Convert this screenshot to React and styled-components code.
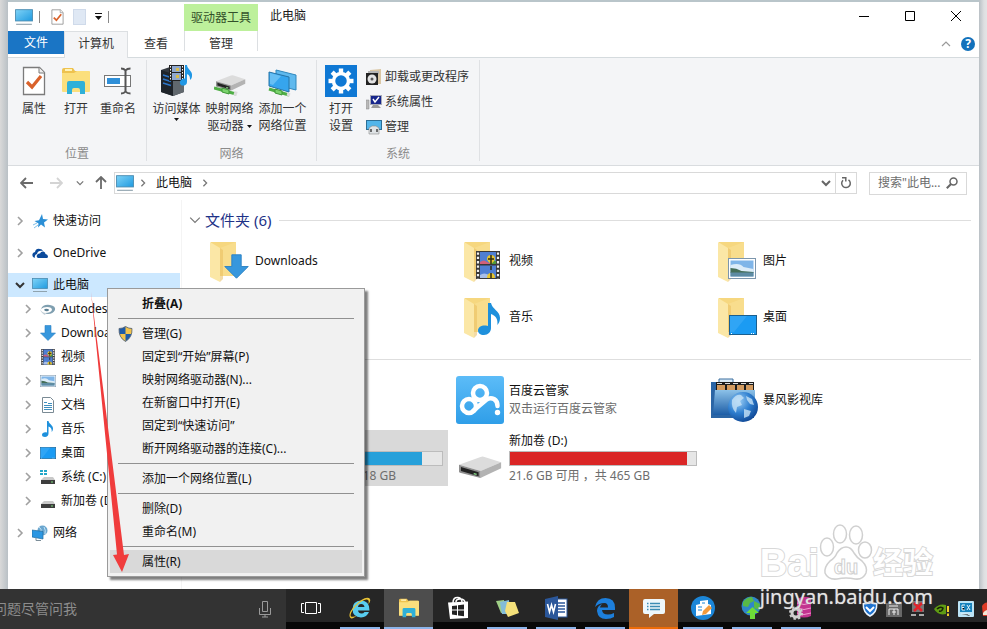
import React from "react";
import styled, { createGlobalStyle, css } from "styled-components";

/* ---------- icons ---------- */

const PcIcon = ({ size = 16 }) => (
    <svg width={size} height={size} viewBox="0 0 16 16">
        <defs>
            <linearGradient id="pc" x1="0" y1="0" x2="1" y2="1">
                <stop offset="0" stopColor="#7fd3f7" />
                <stop offset="1" stopColor="#1f9ae0" />
            </linearGradient>
        </defs>
        <rect x="0.5" y="1.5" width="15" height="10" fill="url(#pc)" stroke="#4a8bb0" strokeWidth=".8" />
        <path d="M1 14.500h14" stroke="#8fa3ae" strokeWidth="1" />
    </svg>
);

const CheckDoc = ({ w = 24, h = 30 }) => (
    <svg width={w} height={h} viewBox="0 0 24 30">
        <path d="M1.5 1.5h16l5 5v22h-21z" fill="#fff" stroke="#7b7b7b" strokeWidth="1.3" />
        <path d="M17 1.5v5.500h5.500" fill="#eee" stroke="#7b7b7b" />
        <path d="M5 16l5 5 9-11" fill="none" stroke="#d9622b" strokeWidth="3.200" />
    </svg>
);

const OpenFolder = ({ w = 30, h = 28 }) => (
    <svg width={w} height={h} viewBox="0 0 30 28">
        <path d="M1 3q0-2 2-2h9l2 3h13q2 0 2 2v18H1z" fill="#eec24f" />
        <path d="M4 2h7v2H4z" fill="#fff3b8" />
        <path d="M1 6h12l3-2h12q1 0 1 2v18q0 1-1 1H2q-1 0-1-1z" fill="#fbdf7d" />
        <path d="M6 27V16q0-2 2-2h14q2 0 2 2v11h-5v-4q0-2-2-2h-4q-2 0-2 2v4z" fill="#2fb0d8" />
    </svg>
);

const RenameIcon = () => (
    <svg width="30" height="28" viewBox="0 0 30 28">
        <rect x="1.500" y="8.500" width="26" height="11" fill="#fff" stroke="#777" />
        <rect x="4" y="11" width="13" height="6" fill="#2f8fd8" />
        <path d="M18 1.500q3 0 4.500 2 1.500-2 5-2M18 26.500q3 0 4.500-2 1.500 2 5 2M22.500 3v22" fill="none" stroke="#555" strokeWidth="2" />
    </svg>
);

const Note = ({ w = 16, h = 16 }) => (
    <svg width={w} height={h} viewBox="0 0 16 16">
        <path d="M7 0h1.500c.5 3 4.500 4 4.500 7.500 0 1.500-.5 2.500-1.300 3.500.3-3-.7-4.500-3.200-5.500v7C8.500 14.500 7 16 5 16s-3-1-3-2.300C2 12 4 11 6 11.300L7 11.500z" fill="#1e90dc" />
    </svg>
);

const Film = ({ w = 14, h = 16 }) => (
    <svg width={w} height={h} viewBox="0 0 24 28">
        <path d="M0 0h24v28H0z" fill="#383838" />
        <path d="M4 1h16v12H4zM4 14.500h16V27H4z" fill="#4f7fd3" />
        <path d="M4 11q4-3 7 0l4 2H4z" fill="#d2607a" />
        <path d="M16 10h4v3h-6z" fill="#4f9a3a" />
        <path d="M4 24q4-3 9 0l3 3H4z" fill="#a9bfe8" />
        <path d="M15 4q4 0 4 4 0 2-4 5-4-3-4-5 0-4 4-4z" fill="#e7c52e" />
        <path d="M15 4v9M12 8h6M15 15v4" stroke="#2f2d16" strokeWidth="1.500" />
        <path d="M15 22q4 0 4 5h-8q0-5 4-5z" fill="#e7c52e" />
        <path d="M15 22v5" stroke="#2f2d16" strokeWidth="1.500" />
        <path d="M2 1.500v26M22 1.500v26" stroke="#f1f1f1" strokeWidth="2.200" strokeDasharray="2.300 2" />
    </svg>
);

const MediaIcon = () => (
    <svg width="32" height="32" viewBox="0 0 32 32">
        <path d="M0 5l9-3 14 3v22l-11 4-12-4z" fill="#333940" />
        <path d="M12 10l11-3v20l-11 4z" fill="#61686e" />
        <path d="M0 5l12 4v22L0 27z" fill="#1f242a" />
        <path d="M2 10l8 2.500M2 14l8 2.500M2 18l8 2.500" stroke="#2d76c9" strokeWidth="1.500" />
        <g transform="translate(8 0)">
            <path d="M0 0h15v16H0z" fill="#222" />
            <path d="M3 1h9v6H3zM3 8h9v7H3z" fill="#8fa8cf" />
            <path d="M7 3h3v3H7zM7 10h3v3H7z" fill="#d8bc4b" />
            <path d="M1.500 1v15M13.500 1v15" stroke="#fff" strokeDasharray="1.500 1.500" />
        </g>
        <path d="M24 0h2c0 4 6 6 5 11 0 2-1 3-2 4 0-4-1-5-3-6v8c0 3-3 4-5 3.500S18 17 20 15s3-1.500 4-1.500z" fill="#2097e5" />
    </svg>
);

const DriveShape = () => (
    <g>
        <path d="M0 10L22 1q2-.8 4 0l17 6L22 17z" fill="#dcdcdc" />
        <path d="M22 17L43 7v7L24 24l-2 1z" fill="#b3b3b3" />
        <path d="M0 10l22 7v8L1 19q-1-.5-1-1z" fill="#8f8f8f" />
        <path d="M2 12.500l18 6v4.500L2 17z" fill="#232323" />
        <path d="M15 20l3 1" stroke="#8adf8a" strokeWidth="1.500" />
    </g>
);

const NetDrive = () => (
    <svg width="32" height="32" viewBox="0 0 32 32">
        <g transform="translate(2 10) scale(.68 .62)"><DriveShape /></g>
        <path d="M0 23l22 6" stroke="#4fae45" strokeWidth="3" />
        <path d="M8 23l7 2v4l-7-2z" fill="#7bd36d" stroke="#3e9637" />
        <path d="M20 28l3 1" stroke="#ddd" strokeWidth="4" />
    </svg>
);

const NetPlace = () => (
    <svg width="32" height="32" viewBox="0 0 32 32">
        <path d="M9 5l20 5v15L9 20z" fill="#5fb9ee" stroke="#2f87bd" />
        <path d="M2 7l20 5v15L2 21z" fill="#36a5ee" stroke="#2774a6" />
        <path d="M3 8l11 3-8 9-3-1z" fill="#7ccbf7" opacity=".7" />
        <path d="M2 24l20 6" stroke="#4fae45" strokeWidth="3" />
        <path d="M8 24l7 2v4l-7-2z" fill="#7bd36d" stroke="#3e9637" />
        <path d="M20 29l3 1" stroke="#ddd" strokeWidth="3" />
    </svg>
);

const GearIcon = () => (
    <svg width="32" height="32" viewBox="0 0 32 32">
        <rect width="32" height="32" fill="#0f78d4" />
        <g stroke="#fff" strokeWidth="4.400">
            {[0, 45, 90, 135].map((a) => (
                <path key={a} d="M16 3.500v25" transform={`rotate(${a} 16 16)`} />
            ))}
        </g>
        <circle cx="16" cy="16" r="7.500" fill="#0f78d4" stroke="#fff" strokeWidth="3.500" />
    </svg>
);

const UninstallIcon = () => (
    <svg width="16" height="16" viewBox="0 0 16 16">
        <path d="M4 1l11-1v15H4z" fill="#d9c6a4" />
        <path d="M2 2h11v3H2z" fill="#b6b6b6" />
        <rect x="0" y="4" width="12" height="12" fill="#222" />
        <circle cx="6" cy="10" r="4.500" fill="#e2e2e2" />
        <circle cx="6" cy="10" r="1.500" fill="#555" />
    </svg>
);

const SysPropIcon = () => (
    <svg width="16" height="16" viewBox="0 0 16 16">
        <path d="M0 6h3v9H0z" fill="#b9b9b9" stroke="#888" strokeWidth=".5" />
        <rect x="4.500" y="1.500" width="11" height="9" fill="#17268c" stroke="#a7aab8" />
        <path d="M7 5l2 3 4-5" fill="none" stroke="#fff" strokeWidth="1.400" />
        <path d="M7 11h5l3 3H5z" fill="#999" />
    </svg>
);

const ManageIcon = () => (
    <svg width="16" height="16" viewBox="0 0 16 16">
        <rect x=".5" y="1.500" width="15" height="9" fill="#52b5ea" stroke="#2d6f96" />
        <path d="M3 9l3-2h4l3 2v6H3z" fill="#dfe3e6" stroke="#8a8a8a" strokeWidth=".6" />
        <path d="M5 10v3M11 10v3" stroke="#444" strokeWidth="1.500" />
    </svg>
);

const StarIcon = () => (
    <svg width="16" height="16" viewBox="0 0 16 16">
        <path d="M10 1l1 5 5 .5-4 3 1 5-4-3-3 3 .5-4-4-2.500 4.500-.8z" fill="#2b8fd6" />
        <path d="M1 12l4-2M2 15l4-3" stroke="#7fbfe8" />
    </svg>
);

const CloudIcon = () => (
    <svg width="16" height="16" viewBox="0 0 16 16">
        <path d="M1 12q-2-4 2-5 1-4 5-3 2 0 3 2-5-1-6 3-3 1-2 4z" fill="#0b4a9b" />
        <path d="M6 13q-2-1-1-3t3-1.500q1-2.500 3.500-2 2 .5 2 2.500 2.500.5 2.500 2.500 0 1-1 1.500z" fill="#0b4a9b" />
    </svg>
);

const AutodeskIcon = () => (
    <svg width="16" height="16" viewBox="0 0 16 16">
        <path d="M1 8q2-5 9-4 6 1 5 5-2 4-7 4-2 0-3-1 6 0 7-3 0-3-5-3-4 0-6 2z" fill="#7f9fb0" />
        <path d="M4 9q1-2 4-1 2 1 0 2-2 1-4-1z" fill="#5a7e92" />
        <path d="M0 8q2 4 6 4l-1 2Q1 12 0 8z" fill="#c3d0d8" />
    </svg>
);

const DownArrow = ({ w = 16, h = 16 }) => (
    <svg width={w} height={h} viewBox="0 0 16 16">
        <path d="M5 .5h6V8h4.500L8 15.500.5 8H5z" fill="#3797dd" stroke="#2c82c4" strokeWidth=".6" />
    </svg>
);

const Picture = ({ w = 16, h = 14 }) => (
    <svg width={w} height={h} viewBox="0 0 28 21" preserveAspectRatio="none">
        <rect x=".5" y=".5" width="27" height="20" fill="#fff" stroke="#7c96ad" />
        <path d="M2.500 2.500h23v16h-23z" fill="#7fb5e8" />
        <path d="M2.500 7q9-3 13 2l10 2v3h-23z" fill="#dcecf8" />
        <path d="M2.500 10q6 0 11 3l12 1v1h-23z" fill="#446e58" />
        <path d="M2.500 14.500h23v4h-23z" fill="#5d8ba3" />
    </svg>
);

const DocIcon = () => (
    <svg width="14" height="16" viewBox="0 0 14 16">
        <path d="M1.500.5h8l3 3v12h-11z" fill="#fff" stroke="#7a8a94" />
        <path d="M3 5.500h3M3 8.500h8M3 10.500h8M3 12.500h8M7 6.500h4" stroke="#3f8fbf" />
    </svg>
);

const Desktop = ({ w = 16, h = 12 }) => (
    <svg width={w} height={h} viewBox="0 0 28 20" preserveAspectRatio="none">
        <rect x=".5" y=".5" width="27" height="19" fill="#1b9bf3" stroke="#1a5f8f" />
        <path d="M1 1h17L5 17H1z" fill="#45b0f8" opacity=".5" />
        <path d="M2 18.500h2M22 18.500h4" stroke="#fff" strokeDasharray="1 1" />
    </svg>
);

const SmallDrive = ({ system }) => (
    <svg width="16" height="16" viewBox="0 0 16 16">
        {system && <path d="M0 1h3v2H0zM4 1h3v2H4zM0 4h3v2H0zM4 4h3v2H4z" fill="#22a7c9" />}
        <path d="M4 8h9l2 3H1z" fill="#c9c9c9" />
        <path d="M1 11h14v4H1z" fill="#3d3d3d" />
        <path d="M11 13h2" stroke="#7ddb7d" />
    </svg>
);

const NetworkIcon = () => (
    <svg width="16" height="16" viewBox="0 0 16 16">
        <circle cx="10.500" cy="5.500" r="5" fill="#6aa6cf" />
        <path d="M7 2q3 2 2 5M12 2q2 3 1 7" stroke="#c4e3f6" fill="none" />
        <path d="M0 5l11 1.500V14L0 12z" fill="#2c97e2" stroke="#226c9e" strokeWidth=".7" />
        <path d="M4 13v2.500h5" stroke="#7b8d98" fill="none" />
    </svg>
);

const ShieldIcon = () => (
    <svg width="15" height="16" viewBox="0 0 15 16">
        <path d="M7.500.5q3 2 6.500 2 .5 9-6.500 13Q.5 11.500 1 2.500q3.500 0 6.500-2z" fill="#1e5ba8" />
        <path d="M7.500.5q3 2 6.500 2 .2 3-.3 5.500H7.500zM7.500 8v7.500Q3 13 1.500 8z" fill="#f2c34c" />
        <path d="M7.500.5q3 2 6.500 2 .5 9-6.500 13Q.5 11.500 1 2.500q3.500 0 6.500-2z" fill="none" stroke="#5a6672" strokeWidth=".8" />
    </svg>
);

// half open folder with something standing in front of it
const FolderTile = ({ children }) => (
    <svg width="48" height="48" viewBox="0 0 48 48">
        <path d="M9 5h25v34H9z" fill="#f6d77f" />
        <path d="M18 11l16-6v34H18z" fill="#f8dd8d" />
        <path d="M8 5l10 6v34l-10-5z" fill="#fbe7a6" />
        <path d="M18 11v34l3-3V13z" fill="#e9bd5f" opacity=".55" />
        {children}
    </svg>
);

const BaiduCloud = () => (
    <svg width="48" height="48" viewBox="0 0 48 48">
        <defs>
            <linearGradient id="bd" x1="0" y1="0" x2="0" y2="1">
                <stop offset="0" stopColor="#5cbcf8" />
                <stop offset="1" stopColor="#2f9ee8" />
            </linearGradient>
        </defs>
        <rect width="48" height="48" rx="3" fill="url(#bd)" />
        <circle cx="13" cy="30" r="7" fill="none" stroke="#fff" strokeWidth="4.500" />
        <circle cx="24" cy="17" r="7" fill="none" stroke="#fff" strokeWidth="4.500" />
        <path d="M17 35l13-11q4-3 8-1 3.500 2 3.500 7" fill="none" stroke="#fff" strokeWidth="4.500" strokeLinecap="round" />
        <circle cx="41.500" cy="36.500" r="2.700" fill="#fff" />
    </svg>
);

const BaofengIcon = () => (
    <svg width="48" height="48" viewBox="0 0 48 48">
        <defs>
            <linearGradient id="bf" x1="0" y1="0" x2="0" y2="1">
                <stop offset="0" stopColor="#8cc1e8" />
                <stop offset="1" stopColor="#1c5da6" />
            </linearGradient>
            <radialGradient id="gl" cx=".35" cy=".3" r=".8">
                <stop offset="0" stopColor="#9ed0f5" />
                <stop offset=".5" stopColor="#2f7fd0" />
                <stop offset="1" stopColor="#0b3f8c" />
            </radialGradient>
        </defs>
        <path d="M9 6V3h14v3" fill="#dbeaf6" stroke="#3b6f9f" />
        <path d="M1 6h43v36H1z" fill="#2b65a5" />
        <path d="M6 6h38v9H6z" fill="#1c1c1c" />
        <path d="M7 9h8v6H7zM17 9h8v6h-8zM27 9h7v6h-7zM36 9h7v6h-7z" fill="#d29a5f" />
        <path d="M7 7.500h36" stroke="#ddd" strokeDasharray="5 3" />
        <path d="M5 14h40v25H3z" fill="url(#bf)" />
        <circle cx="33" cy="31" r="15" fill="url(#gl)" />
        <path d="M22 24q4-6 9-5l3 3-4 3 2 4-5 2-1 6q-5-5-4-13zM36 20l6 3 2 6-4-1-3-4zM34 33l7 2-2 5-5 2z" fill="#c7e2f6" opacity=".8" />
    </svg>
);

const BigDrive = () => (
    <svg width="48" height="48" viewBox="0 0 48 48">
        <g transform="translate(3 22) scale(.98 .88)"><DriveShape /></g>
    </svg>
);

const Chevron = ({ dir = "right", size = 10, color = "#9a9a9a", weight = 1.6 }) => {
    const turn = { right: 0, down: 90, left: 180, up: 270 }[dir];
    return (
        <svg width={size} height={size} viewBox="0 0 10 10">
            <path d="M3 1l4 4-4 4" fill="none" stroke={color} strokeWidth={weight} transform={`rotate(${turn} 5 5)`} />
        </svg>
    );
};

const Arrow = ({ dir = "left", color = "#6a6a6a" }) => (
    <svg width="14" height="14" viewBox="0 0 14 14">
        <path d="M1 7h12M6 2L1 7l5 5" fill="none" stroke={color} strokeWidth="1.800" transform={`rotate(${{ left: 0, up: 90, right: 180 }[dir]} 7 7)`} />
    </svg>
);

const Caret = () => (
    <svg width="5" height="3" viewBox="0 0 5 3"><path d="M0 0h5L2.500 3z" fill="#111" /></svg>
);

/* ---------- taskbar icons ---------- */

const IeIcon = () => (
    <svg width="24" height="24" viewBox="0 0 24 24">
        <path d="M21 16q-2 5-8 5.500-8.500-.5-8.500-8.500T13 4.500q8.500 0 8.500 10H10q.5 3 3.500 3 2 0 3-1.500zM10 11h6.500q-.5-3-3.300-3T10 11z" fill="#58cdf0" fillRule="evenodd" />
        <path d="M2.500 22Q-1 18 7 9.500 16 0 21 2q3 2-1 7 2-5-1-5.500Q15 3 8 10 1 18 3 20.500q2 1 6-1-5 4-6.500 2.500z" fill="#eac436" />
    </svg>
);

const StoreIcon = () => (
    <svg width="24" height="24" viewBox="0 0 24 24">
        <path d="M7 7Q7 1 12 1.500q4 .5 4 5M10 6q0-3 4-3 5 0 5 4" fill="none" stroke="#fff" strokeWidth="1.500" />
        <path d="M2 6.500l20-1V22L4 23z" fill="#fff" />
        <path d="M6 10l5-.6v4.200H6zM12 9.300l6-.7v5h-6zM6 14.600h5v4.600l-5-.7zM12 14.600h6v5.600l-6-.8z" fill="#222" />
    </svg>
);

const NotesIcon = () => (
    <svg width="24" height="24" viewBox="0 0 24 24">
        <path d="M1 5l8-1 3 12-6 1z" fill="#9fcf86" />
        <path d="M5 6l9-2 1 14-8 0z" fill="#83bcd8" />
        <path d="M12 6l8 0 4 11-11 4-3-6z" fill="#f4e07a" />
    </svg>
);

const WordIcon = () => (
    <svg width="24" height="24" viewBox="0 0 24 24">
        <rect x="12" y="3" width="11" height="18" fill="#fff" stroke="#2b579a" />
        <path d="M14 7h7M14 10h7M14 13h7M14 16h7" stroke="#2b579a" strokeWidth="1.500" />
        <path d="M1 3l13-3v24L1 21z" fill="#2b579a" />
        <path d="M3.500 8l2 8 2-7 2 7 2-8" fill="none" stroke="#fff" strokeWidth="1.600" />
    </svg>
);

const EdgeIcon = () => (
    <svg width="24" height="24" viewBox="0 0 24 24">
        <path d="M2 11Q4 2 12.500 2 22 2 22 12v2H9q.5 4.500 6 4.500 3 0 6-1.500v4q-3 2-8 2-8 0-9-8 0-5 5-7-2 2-2 3.500h8Q15 7 11.500 7 6 7 2 11z" fill="#1d7fdb" />
    </svg>
);

const ChatIcon = () => (
    <svg width="24" height="24" viewBox="0 0 24 24">
        <path d="M3 3h18q2 0 2 2v11q0 2-2 2h-9l-5 4v-4H3q-2 0-2-2V5q0-2 2-2z" fill="#eef7fb" />
        <path d="M8 7.500h10M8 10.500h10M8 13.500h10" stroke="#3c8cb4" strokeWidth="1.300" />
        <path d="M5 7.500h1.500M5 10.500h1.500M5 13.500h1.500" stroke="#3c8cb4" strokeWidth="1.300" />
    </svg>
);

const EditorIcon = () => (
    <svg width="24" height="24" viewBox="0 0 24 24">
        <circle cx="12" cy="12" r="12" fill="#1b86d8" />
        <path d="M5 9l4-1V5l8-1v4l3 1v9l-15 2z" fill="#fff" />
        <path d="M7 11h4M7 14h4M11 7h3" stroke="#1b86d8" />
        <path d="M11 19l1-4 6-6 3 3-6 6z" fill="#f19a3c" />
    </svg>
);

const GlobeIcon = () => (
    <svg width="24" height="24" viewBox="0 0 24 24">
        <circle cx="11" cy="10" r="9.500" fill="#2f86c9" />
        <path d="M3 6q4-5 9-5l2 4-4 2-2 4-5-1zM14 5l6 3-1 6-5-2z" fill="#58b947" />
        <path d="M10 23v-6H6l6.500-6L19 17h-4v6z" fill="#6ddc38" />
    </svg>
);

const DbIcon = () => (
    <svg width="24" height="24" viewBox="0 0 24 24">
        <path d="M8 3q7-4 14-1v18q-7 3-14 0z" fill="#c2338f" />
        <path d="M8 7q7 3 14 0M8 12q7 3 14 0M8 17q7 3 14 0" stroke="#f09bcf" fill="none" />
        <circle cx="7" cy="17" r="4" fill="none" stroke="#cfcfcf" strokeWidth="3" />
        <circle cx="7" cy="17" r="6" fill="none" stroke="#cfcfcf" strokeWidth="2" strokeDasharray="2.400 2.300" />
    </svg>
);

const TaskViewIcon = () => (
    <svg width="20" height="14" viewBox="0 0 20 14">
        <path d="M4.500 1.500h11v11h-11zM3 2.500H.5v9H3M17 2.500h2.500v9H17" fill="none" stroke="#fff" />
    </svg>
);

const MicIcon = () => (
    <svg width="12" height="18" viewBox="0 0 12 18">
        <path d="M3.500 1.500h5v10h-5zM.5 8v6.500h11V8M6 14.500V17M3 17h6" fill="none" stroke="#9a9a9a" />
    </svg>
);

const TRAY = [
    <svg key="guard" width="16" height="16" viewBox="0 0 16 16">
        <path d="M8 0q4 2 7.500 2Q16 12 8 16 0 12 .5 2 4 2 8 0z" fill="#e9f2fb" />
        <path d="M8 2q3 1.500 6 1.500Q14 11 8 14 2 11 2 3.500 5 3.500 8 2z" fill="#1d72cf" />
        <path d="M4 6l4 4 4-4" fill="none" stroke="#fff" strokeWidth="2" />
    </svg>,
    <svg key="store" width="16" height="16" viewBox="0 0 16 16">
        <path d="M0 2h16v14H0z" fill="#686868" />
        <path d="M3 5h9M3 8h9M3 8v6M12 8v6M6 11h4M8 8v6M10 3l4-2" stroke="#eee" fill="none" />
    </svg>,
    <svg key="net" width="16" height="16" viewBox="0 0 16 16">
        <path d="M2 0h12v11H2z" fill="#777" />
        <path d="M4 2l8 8M12 2l-8 8" stroke="#e3232b" strokeWidth="2.500" />
        <path d="M1 14h5M9 14h5" stroke="#aaa" strokeWidth="2" />
    </svg>,
    <svg key="gpu" width="16" height="16" viewBox="0 0 16 16">
        <path d="M0 8q5-6 12-4v9Q4 15 0 8z" fill="#5f9c13" />
        <path d="M3 8q3-3 6-1-1 4-4 3" fill="none" stroke="#192206" strokeWidth="1.500" />
        <path d="M14 5v6M14 12.500V15" stroke="#f1d02c" strokeWidth="2" />
    </svg>,
    <svg key="gfx" width="16" height="16" viewBox="0 0 16 16">
        <rect width="16" height="16" rx="1" fill="#bce4f6" />
        <path d="M2 2h12v9H2z" fill="#1883bd" />
        <path d="M4 4h3M4 4v5h3M4 6.500h2M9 4l3 5M12 4L9 9M3 13h7l3 2" stroke="#e2f5fd" />
    </svg>,
    <svg key="fire" width="16" height="16" viewBox="0 0 16 16">
        <path d="M0 5q3-5 7-3l7 6-3 7H1z" fill="#dd3a26" />
        <path d="M1 12q3-5 8-2v4H1z" fill="#f2e7d7" />
    </svg>,
];

/* ---------- data ---------- */

const tree = [
    { name: "快速访问", icon: <StarIcon />, gap: 8 },
    { name: "OneDrive", icon: <CloudIcon />, gap: 8 },
    { name: "此电脑", icon: <PcIcon />, open: true },
    { name: "Autodesk", icon: <AutodeskIcon />, child: true },
    { name: "Downloads", icon: <DownArrow />, child: true },
    { name: "视频", icon: <Film />, child: true },
    { name: "图片", icon: <Picture h={12} />, child: true },
    { name: "文档", icon: <DocIcon />, child: true },
    { name: "音乐", icon: <Note />, child: true },
    { name: "桌面", icon: <Desktop />, child: true },
    { name: "系统 (C:)", icon: <SmallDrive system />, child: true },
    { name: "新加卷 (D:)", icon: <SmallDrive />, child: true, gap: 8 },
    { name: "网络", icon: <NetworkIcon /> },
];

const folders = [
    { name: "Downloads", over: <g transform="translate(22 17)"><DownArrow w={25} h={25} /></g> },
    { name: "视频", over: <g transform="translate(20 14)"><Film w={24} h={28} /></g> },
    { name: "图片", over: <g transform="translate(18 21)"><Picture w={28} h={21} /></g>, col: 3 },
    { name: "音乐", over: <g transform="translate(18 10)"><Note w={32} h={32} /></g>, col: 2 },
    { name: "桌面", over: <g transform="translate(19 22)"><Desktop w={28} h={20} /></g> },
];

const menu = [
    { label: "折叠(A)", bold: true },
    null,
    { label: "管理(G)", icon: <ShieldIcon /> },
    { label: "固定到“开始”屏幕(P)" },
    { label: "映射网络驱动器(N)..." },
    { label: "在新窗口中打开(E)" },
    { label: "固定到“快速访问”" },
    { label: "断开网络驱动器的连接(C)..." },
    null,
    { label: "添加一个网络位置(L)" },
    null,
    { label: "删除(D)" },
    { label: "重命名(M)" },
    null,
    { label: "属性(R)", hot: true },
];

const apps = [
    { name: "Internet Explorer", icon: <IeIcon />, running: true },
    { name: "文件资源管理器", icon: <OpenFolder w={22} h={20} />, running: true, active: true },
    { name: "应用商店", icon: <StoreIcon /> },
    { name: "便笺", icon: <NotesIcon />, running: true },
    { name: "Word", icon: <WordIcon />, running: true },
    { name: "Edge", icon: <EdgeIcon />, running: true },
    { name: "消息", icon: <ChatIcon />, alert: true },
    { name: "编辑器", icon: <EditorIcon />, running: true },
    { name: "下载", icon: <GlobeIcon />, running: true },
    { name: "数据库", icon: <DbIcon />, running: true },
];

/* ---------- page ---------- */

export default function App() {
    return (
        <Screen>
            <GlobalStyle />
            <Backdrop>
                <Explorer>
                    <TitleBar>
                        <QuickAccess>
                            <PcIcon size={18} />
                            <Tick />
                            <CheckDoc w={13} h={16} />
                            <BlankPage />
                            <Customize aria-label="自定义快速访问工具栏">
                                <i />
                                <svg width="7" height="4" viewBox="0 0 7 4"><path d="M0 0h7L3.500 4z" fill="#111" /></svg>
                            </Customize>
                            <Tick />
                        </QuickAccess>
                        <ToolTab>驱动器工具</ToolTab>
                        <Title>此电脑</Title>
                        <WinButton aria-label="最小化">
                            <svg width="10" height="10"><path d="M0 5.500h10" stroke="#000" /></svg>
                        </WinButton>
                        <WinButton aria-label="最大化">
                            <svg width="10" height="10"><path d="M.5 .5h9v9h-9z" fill="none" stroke="#000" /></svg>
                        </WinButton>
                        <WinButton aria-label="关闭">
                            <svg width="10" height="10"><path d="M0 0l10 10M10 0L0 10" stroke="#000" /></svg>
                        </WinButton>
                    </TitleBar>

                    <Tabs>
                        <FileTab>文件</FileTab>
                        <Tab $width={64} $current>计算机</Tab>
                        <Tab $width={56}>查看</Tab>
                        <Tab $width={74} $tool>管理</Tab>
                        <TabEnd>
                            <IconButton aria-label="折叠功能区"><Chevron dir="up" weight={1.2} /></IconButton>
                            <HelpButton aria-label="帮助">?</HelpButton>
                        </TabEnd>
                    </Tabs>

                    <Ribbon>
                        <Group $width={139}>
                            <GroupBody $inset={5}>
                                <BigButton $width={42}><BigIcon><CheckDoc /></BigIcon>属性</BigButton>
                                <BigButton $width={42}><BigIcon><OpenFolder /></BigIcon>打开</BigButton>
                                <BigButton $width={42}><BigIcon><RenameIcon /></BigIcon>重命名</BigButton>
                            </GroupBody>
                            <GroupName>位置</GroupName>
                        </Group>
                        <Group $width={170}>
                            <GroupBody $inset={3}>
                                <BigButton $width={53}>
                                    <BigIcon><MediaIcon /></BigIcon>访问媒体<CaretLine><Caret /></CaretLine>
                                </BigButton>
                                <BigButton $width={53}>
                                    <BigIcon><NetDrive /></BigIcon>映射网络<span>驱动器 <Caret /></span>
                                </BigButton>
                                <BigButton $width={53}><BigIcon><NetPlace /></BigIcon>添加一个<span>网络位置</span></BigButton>
                            </GroupBody>
                            <GroupName>网络</GroupName>
                        </Group>
                        <Group $width={163}>
                            <GroupBody $inset={3}>
                                <BigButton $width={42}><BigIcon><GearIcon /></BigIcon>打开<span>设置</span></BigButton>
                                <SmallList>
                                    <SmallButton><UninstallIcon />卸载或更改程序</SmallButton>
                                    <SmallButton><SysPropIcon />系统属性</SmallButton>
                                    <SmallButton><ManageIcon />管理</SmallButton>
                                </SmallList>
                            </GroupBody>
                            <GroupName>系统</GroupName>
                        </Group>
                    </Ribbon>

                    <AddressRow>
                        <NavButtons>
                            <IconButton aria-label="后退"><Arrow /></IconButton>
                            <IconButton aria-label="前进"><Arrow dir="right" color="#d4d4d4" /></IconButton>
                            <IconButton aria-label="最近"><Chevron dir="down" size={8} color="#777" /></IconButton>
                            <IconButton aria-label="上移"><Arrow dir="up" /></IconButton>
                        </NavButtons>
                        <Address>
                            <PcIcon size={18} />
                            <Chevron color="#777" size={8} />
                            <Crumb>此电脑</Crumb>
                            <Chevron color="#777" size={8} />
                            <AddressEnd>
                                <IconButton aria-label="历史记录"><Chevron dir="down" color="#666" weight={2} /></IconButton>
                                <Refresh aria-label="刷新">
                                    <svg width="12" height="12" viewBox="0 0 12 12">
                                        <path d="M3 3.200a4.300 4.300 0 1 0 5.500-.4M2 .8h3.800v3.700" fill="none" stroke="#666" strokeWidth="1.500" />
                                    </svg>
                                </Refresh>
                            </AddressEnd>
                        </Address>
                        <Search>
                            <input type="text" aria-label="搜索此电脑" placeholder={'搜索"此电...'} />
                            <svg width="12" height="12" viewBox="0 0 12 12">
                                <circle cx="7.500" cy="4.500" r="3.500" fill="none" stroke="#666" strokeWidth="1.500" />
                                <path d="M5 7L.8 11.200" stroke="#666" strokeWidth="2" />
                            </svg>
                        </Search>
                    </AddressRow>

                    <Body>
                        <Tree>
                            {tree.map((n) => (
                                <TreeRow key={n.name} $child={n.child} $open={n.open} $gap={n.gap}>
                                    <Chevron dir={n.open ? "down" : "right"} color={n.open ? "#333" : "#a0a0a0"} weight={n.open ? 2 : 1.6} />
                                    <TreeIcon>{n.icon}</TreeIcon>
                                    {n.name}
                                </TreeRow>
                            ))}
                        </Tree>
                        <Main>
                            <SectionHead><Chevron dir="down" color="#777" weight={1} size={12} />文件夹 (6)<hr /></SectionHead>
                            <Tiles>
                                {folders.map((f) => (
                                    <Tile key={f.name} $col={f.col}>
                                        <FolderTile>{f.over}</FolderTile>
                                        <TileText>{f.name}</TileText>
                                    </Tile>
                                ))}
                            </Tiles>
                            <SectionHead as="div"><hr /></SectionHead>
                            <Tiles $gap={2}>
                                <Tile $col={2}>
                                    <BaiduCloud />
                                    <TileText>百度云管家<Muted>双击运行百度云管家</Muted></TileText>
                                </Tile>
                                <Tile>
                                    <BaofengIcon />
                                    <TileText>暴风影视库</TileText>
                                </Tile>
                                <Drive name="系统 (C:)" used={89} color="#26a0da" free="12.6" total="118" selected />
                                <Drive name="新加卷 (D:)" used={95} color="#da2626" free="21.6" total="465" />
                            </Tiles>
                        </Main>
                    </Body>

                    <Menu role="menu">
                        {menu.map((m, i) =>
                            m ? (
                                <li key={i} role="none">
                                    <MenuItem role="menuitem" $bold={m.bold} $hot={m.hot}>
                                        <MenuIcon>{m.icon}</MenuIcon>
                                        {m.label}
                                    </MenuItem>
                                </li>
                            ) : (
                                <MenuLine key={i} role="separator" />
                            )
                        )}
                    </Menu>
                    <Pointer width="44" height="286" viewBox="0 0 44 286">
                        <path d="M3 4L36 267l5-1-7 18-9-17 4-.5z" fill="#f03c3c" />
                    </Pointer>
                </Explorer>
            </Backdrop>

            <Taskbar>
                <Cortana>
                    <input type="text" aria-label="搜索" placeholder="问题尽管问我" />
                    <MicIcon />
                </Cortana>
                <TaskButton aria-label="任务视图"><TaskViewIcon /></TaskButton>
                {apps.map((a) => (
                    <TaskButton key={a.name} aria-label={a.name} $running={a.running} $active={a.active} $alert={a.alert}>
                        {a.icon}
                    </TaskButton>
                ))}
                <Tray>{TRAY.map((t, i) => <TrayIcon key={i}>{t}</TrayIcon>)}</Tray>
            </Taskbar>

            <Watermark>
                <Brand>
                    <Outline $size={38}>Bai</Outline>
                    <svg width="54" height="60" viewBox="0 0 52 60">
                        <g fill="#fff" stroke="#d0d0d0" strokeWidth="1.500">
                            <ellipse cx="7" cy="26" rx="6.500" ry="9" />
                            <ellipse cx="20" cy="13" rx="6.500" ry="9" />
                            <ellipse cx="36" cy="14" rx="6.500" ry="9" />
                            <ellipse cx="45" cy="29" rx="6.500" ry="8" />
                            <path d="M26 26q5 0 8 6 3 5 8 8 6 6 4 12-3 7-11 6-9-2-18 0-9 1-12-6-1-6 5-12 5-3 7-8 4-6 9-6z" />
                        </g>
                        <text x="26" y="53" textAnchor="middle" fontSize="20" fontWeight="700" fontFamily="Liberation Sans, sans-serif" fill="#fff" stroke="#d0d0d0" strokeWidth="1">du</text>
                    </svg>
                    <Outline $size={30}>经验</Outline>
                </Brand>
                <Site>jingyan.baidu.com</Site>
            </Watermark>
        </Screen>
    );
}

function Drive({ name, used, color, free, total, selected }) {
    return (
        <Tile $selected={selected}>
            <BigDrive />
            <TileText $wide>
                {name}
                <Meter><div style={{ width: `${used}%`, background: color }} /></Meter>
                <Muted>{free} GB 可用 ，共 {total} GB</Muted>
            </TileText>
        </Tile>
    );
}

/* ---------- styles ---------- */

const GlobalStyle = createGlobalStyle`
*{
    box-sizing:border-box;
}
body{
    margin:0;
    overflow:hidden;
}
body,button,input{
    font-family:"Noto Sans","Noto Sans CJK SC",sans-serif;
    font-size:12px;
    line-height:18px;
    color:#1a1a1a;
}
button,input{
    border:0;
    padding:0;
    background:none;
    outline:none;
}
svg{
    display:block;
    flex:none;
}
`;

const Screen = styled.div`
position:relative;
display:grid;
grid-template-rows:1fr 40px;
height:100vh;
`;

const Backdrop = styled.div`
display:grid;
min-height:0;
padding:0 8px;
background:linear-gradient(90deg,#d9d9d9 0,#b9c0c5 8px,#b9c0c5 calc(100% - 8px),#dedfe1 calc(100% - 3px),#e4e4e5 100%);
`;

const Explorer = styled.div`
position:relative;
display:flex;
flex-direction:column;
min-height:0;
min-width:0;
background:#fff;
border-top:2px solid #b9c5ca;
`;

const TitleBar = styled.div`
display:flex;
height:29px;
flex:none;
`;

const QuickAccess = styled.div`
display:flex;
align-items:center;
gap:6px;
width:176px;
padding-left:7px;
`;

const Tick = styled.span`
width:1px;
height:12px;
margin-right:5px;
background:#888;
`;

const BlankPage = styled.span`
width:13px;
height:16px;
margin:0 3px;
border:1px solid #cfdaea;
background:#dfe8f4;
`;

const Customize = styled.button`
display:flex;
flex-direction:column;
align-items:center;
gap:2px;
i{
    width:7px;
    height:1px;
    background:#111;
}
`;

const ToolTab = styled.div`
display:flex;
align-items:center;
justify-content:center;
width:74px;
margin-top:2px;
background:#bdf09b;
color:#33502a;
`;

const Title = styled.div`
flex:1;
padding:5px 12px;
`;

const WinButton = styled.button`
display:flex;
align-items:center;
justify-content:center;
width:46px;
padding-bottom:2px;
`;

const Tabs = styled.div`
display:flex;
height:27px;
flex:none;
border-bottom:1px solid #d5dbde;
`;

const FileTab = styled.button`
width:56px;
height:23px;
background:#1a75c5;
color:#fff;
`;

const Tab = styled.button`
width:${(p) => p.$width}px;
height:27px;
padding-bottom:2px;
color:#333;
${(p) => p.$current && css`
    background:#f4f5f7;
    border:1px solid #dcdfe2;
    border-bottom:0;
`}
${(p) => p.$tool && css`
    height:20px;
    padding-top:4px;
    padding-bottom:0;
    border:1px solid #dcdfe2;
    border-width:0 1px;
`}
`;

const TabEnd = styled.div`
display:flex;
align-items:center;
gap:10px;
margin-left:auto;
padding-right:4px;
`;

const IconButton = styled.button`
display:flex;
align-items:center;
justify-content:center;
`;

const HelpButton = styled.button`
width:14px;
height:14px;
border-radius:7px;
background:#1271bb;
color:#fff;
font-weight:700;
line-height:14px;
`;

const Ribbon = styled.div`
display:flex;
height:108px;
flex:none;
padding:2px 0 4px;
background:#f4f5f7;
border-bottom:1px solid #d9dcdf;
`;

const Group = styled.div`
display:flex;
flex-direction:column;
justify-content:space-between;
width:${(p) => p.$width}px;
border-right:1px solid #dfe1e4;
`;

const GroupBody = styled.div`
display:flex;
padding:5px 0 0 ${(p) => p.$inset}px;
`;

const GroupName = styled.div`
text-align:center;
line-height:14px;
color:#8b8b8b;
`;

const BigButton = styled.button`
display:flex;
flex-direction:column;
align-items:center;
width:${(p) => p.$width}px;
line-height:17px;
color:#333;
white-space:nowrap;
svg{
    display:inline-block;
    vertical-align:middle;
}
`;

const BigIcon = styled.span`
display:flex;
align-items:center;
justify-content:center;
width:32px;
height:32px;
margin-bottom:3px;
`;

const CaretLine = styled.span`
line-height:3px;
`;

const SmallList = styled.div`
display:flex;
flex-direction:column;
padding-left:4px;
`;

const SmallButton = styled.button`
display:flex;
align-items:center;
gap:3px;
height:25px;
padding-bottom:2px;
color:#333;
`;

const AddressRow = styled.div`
display:flex;
align-items:center;
flex:none;
height:34px;
padding-right:12px;
`;

const NavButtons = styled.div`
display:grid;
grid-template-columns:28px 30px 18px 24px;
width:106px;
padding-left:5px;
`;

const Address = styled.div`
display:flex;
align-items:center;
gap:5px;
flex:1;
height:22px;
padding-left:1px;
border:1px solid #d9d9d9;
`;

const Crumb = styled.button`
padding:0 4px;
color:#111;
`;

const AddressEnd = styled.div`
display:flex;
align-self:stretch;
gap:4px;
margin-left:auto;
`;

const Refresh = styled(IconButton)`
width:21px;
border-left:1px solid #d9d9d9;
`;

const Search = styled.label`
display:flex;
align-items:center;
width:98px;
height:23px;
margin-left:12px;
padding:0 8px;
border:1px solid #d9d9d9;
input{
    flex:1;
    min-width:0;
}
input::placeholder{
    color:#6d6d6d;
}
`;

const Body = styled.div`
display:flex;
flex:1;
min-height:0;
`;

const Tree = styled.nav`
display:flex;
flex-direction:column;
width:174px;
flex:none;
padding:9px 1px 0 0;
border-right:1px solid #f4f4f4;
`;

const TreeRow = styled.button`
display:flex;
align-items:center;
flex:none;
height:24px;
margin-bottom:${(p) => p.$gap || 0}px;
padding-left:${(p) => (p.$child ? 15 : 7)}px;
background:${(p) => (p.$open ? "#cce8ff" : "none")};
white-space:nowrap;
color:#111;
`;

const TreeIcon = styled.span`
display:flex;
justify-content:center;
width:16px;
margin:0 5px 0 7px;
`;

const Main = styled.div`
flex:1;
min-width:0;
padding:7px 8px 0 7px;
`;

const SectionHead = styled.h2`
display:flex;
align-items:center;
gap:4px;
height:26px;
margin:0;
font-size:15px;
font-weight:400;
color:#1e3287;
hr{
    flex:1;
    margin:0 0 0 4px;
    border:0;
    border-top:1px solid #dedede;
}
`;

const Tiles = styled.div`
display:grid;
grid-template-columns:repeat(auto-fill,247px);
grid-auto-rows:56px;
column-gap:7px;
row-gap:${(p) => p.$gap || 0}px;
padding:0 0 1px 12px;
`;

const Tile = styled.div`
display:flex;
align-items:center;
gap:5px;
padding-left:1px;
grid-column-start:${(p) => p.$col || "auto"};
background:${(p) => (p.$selected ? "#d9d9d9" : "none")};
`;

const TileText = styled.div`
width:${(p) => (p.$wide ? "188px" : "auto")};
color:#111;
`;

const Muted = styled.div`
color:#6d6d6d;
`;

const Meter = styled.div`
height:15px;
margin:1px 0;
border:1px solid #bcbcbc;
background:#e6e6e6;
div{
    height:100%;
}
`;

// right click menu, floats over tree and tiles
const Menu = styled.ul`
position:absolute;
left:99px;
top:286px;
width:258px;
margin:0;
padding:3px 2px;
list-style:none;
background:#f1f1f1;
border:1px solid #9a9a9a;
box-shadow:3px 3px 2px rgba(0,0,0,.5);
`;

const MenuItem = styled.button`
display:flex;
align-items:center;
width:100%;
height:23px;
padding-left:8px;
font-weight:${(p) => (p.$bold ? 700 : 400)};
background:${(p) => (p.$hot ? "#d9d9d9" : "none")};
color:#111;
`;

const MenuIcon = styled.span`
width:24px;
`;

const MenuLine = styled.li`
height:1px;
margin:3px 8px;
background:#919191;
`;

const Pointer = styled.svg`
position:absolute;
left:80px;
top:286px;
`;

const Taskbar = styled.div`
display:flex;
min-width:0;
background:linear-gradient(#262626 33px,#080808 33px);
`;

const Cortana = styled.label`
display:flex;
align-items:center;
justify-content:space-between;
width:286px;
flex:none;
padding-right:15px;
background:#333;
input{
    width:200px;
    margin-left:-7px;
    font-size:14px;
}
input::placeholder{
    color:#8c8c8c;
}
`;

const TaskButton = styled.button`
display:flex;
align-items:center;
justify-content:center;
width:49px;
flex:none;
border-bottom:2px solid transparent;
${(p) => p.$running && css`
    background:linear-gradient(#8cb4ea,#8cb4ea) center bottom/40px 2px no-repeat border-box;
`}
${(p) => p.$active && css`
    background:#4d4d4d;
    border-color:#8cb4ea;
`}
${(p) => p.$alert && css`
    background:#ab6128;
    border-color:#ee6c08;
`}
`;

const Tray = styled.div`
display:flex;
align-items:center;
flex:1;
min-width:0;
padding-left:33px;
overflow:hidden;
`;

const TrayIcon = styled.span`
display:flex;
justify-content:center;
flex:none;
width:24px;
`;

const Watermark = styled.div`
position:absolute;
right:54px;
bottom:20px;
pointer-events:none;
`;

const Brand = styled.div`
display:flex;
align-items:flex-end;
height:60px;
margin-bottom:4px;
`;

const Outline = styled.span`
font-family:"Liberation Sans","Noto Sans CJK SC",sans-serif;
font-size:${(p) => p.$size}px;
line-height:36px;
font-weight:700;
color:#fff;
-webkit-text-stroke:2px #d8d8d8;
paint-order:stroke fill;
`;

const Site = styled.div`
font-size:20px;
line-height:24px;
color:#e4e4e4;
text-shadow:0 0 1px #999;
`;
